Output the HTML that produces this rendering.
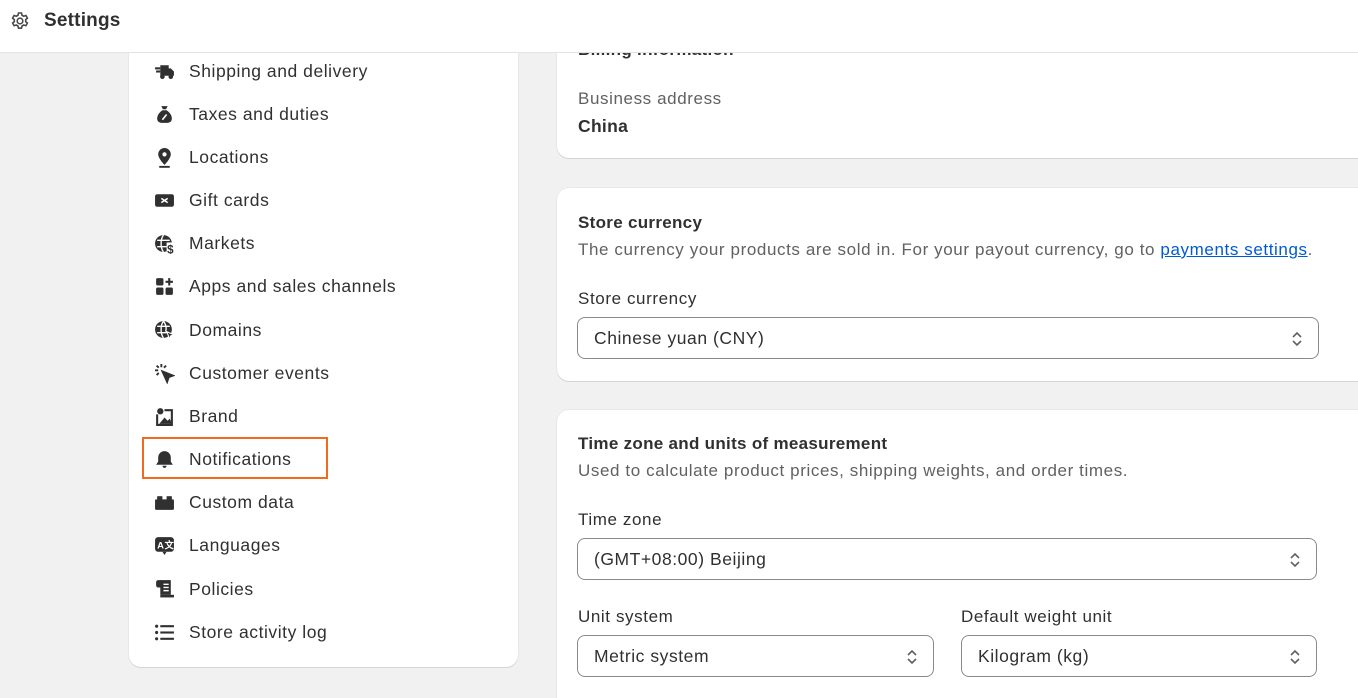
<!DOCTYPE html>
<html><head><style>
*{box-sizing:border-box;margin:0;padding:0}
html,body{width:1358px;height:698px;overflow:hidden}
body{background:#f1f1f1;font-family:"Liberation Sans",sans-serif;color:#303030;position:relative}
.hdr{position:absolute;left:0;top:0;width:1358px;height:53px;background:#fff;border-bottom:1px solid #e3e3e3;z-index:5}
.hdr span{position:absolute;left:44px;top:10px;font-size:19px;font-weight:bold;color:#303030;letter-spacing:.2px}
.hdr svg{position:absolute;left:10px;top:11px}
.side{position:absolute;left:129px;top:20px;width:389px;height:647px;background:#fff;border-radius:12px;box-shadow:0 1px 0 #d4d4d4,0 0 0 1px #e8e8e8}
.it{position:absolute;left:189px;font-size:17.5px;color:#303030;letter-spacing:.55px;margin-top:1px}
.ic{position:absolute;left:154px;width:21px;height:21px}
.card{position:absolute;left:557px;width:820px;background:#fff;border-radius:12px;box-shadow:0 1px 0 #d4d4d4,0 0 0 1px #e8e8e8}
.t{position:absolute;font-size:17px;letter-spacing:.6px;margin-top:1px}
.g{color:#616161}
.b{font-weight:bold;letter-spacing:.3px}
.sel{position:absolute;border:1px solid #8a8a8a;border-radius:8px;height:42px;background:#fff;font-size:17.5px;padding:10px 16px;color:#303030;letter-spacing:.55px}
.sel svg{position:absolute;right:14px;top:12px}
.nb{position:absolute;left:142px;top:437px;width:186px;height:42px;border:2px solid #f26b1d}
</style></head><body>
<div class="hdr"><svg width="20" height="20" viewBox="0 0 20 20" fill="none" stroke="#4a4a4a" stroke-width="1.6"><circle cx="10" cy="10" r="2.8"/><path d="M8.5 2h3l.5 2.2 1.7 1 2.2-.7 1.5 2.6-1.7 1.5v2l1.7 1.5-1.5 2.6-2.2-.7-1.7 1-.5 2.2h-3l-.5-2.2-1.7-1-2.2.7-1.5-2.6 1.7-1.5v-2L2.6 7.1 4.1 4.5l2.2.7 1.7-1z"/></svg><span>Settings</span></div>
<div class="side"></div>
<div class="nb"></div>
<svg class="ic" style="top:61px" viewBox="0 0 20 20" fill="#303030"><rect x="1" y="6" width="5" height="2"/><rect x="2" y="9" width="4" height="2"/><path d="M6 4h8v3h2l3 3v4H6z"/><circle cx="8" cy="15" r="2.2"/><circle cx="16" cy="15" r="2.2"/></svg>
<div class="it" style="top:60px">Shipping and delivery</div>
<svg class="ic" style="top:104px" viewBox="0 0 20 20" fill="#303030"><path d="M7 2h6l-1.5 3h-3z"/><path d="M8 6h4c3 2 5 5 5 8a4 4 0 0 1-4 4H7a4 4 0 0 1-4-4c0-3 2-6 5-8z"/><path d="M8 15l4-5" stroke="#fff" stroke-width="1.5"/></svg>
<div class="it" style="top:103px">Taxes and duties</div>
<svg class="ic" style="top:147px" viewBox="0 0 20 20" fill="#303030"><path d="M10 1a6 6 0 0 1 6 6c0 4-6 10-6 10S4 11 4 7a6 6 0 0 1 6-6z"/><circle cx="10" cy="7" r="2" fill="#fff"/><rect x="5" y="18" width="10" height="1.8"/></svg>
<div class="it" style="top:146px">Locations</div>
<svg class="ic" style="top:190px" viewBox="0 0 20 20" fill="#303030"><rect x="1" y="4" width="18" height="12" rx="2"/><path d="M7 8l3 2 3-2M7 12l3-2 3 2" stroke="#fff" stroke-width="1.5" fill="none"/></svg>
<div class="it" style="top:189px">Gift cards</div>
<svg class="ic" style="top:233px" viewBox="0 0 20 20" fill="#303030"><circle cx="9" cy="10" r="8"/><path d="M3 7h12M3 13h9M9 2c-3 4-3 12 0 16" stroke="#fff" stroke-width="1.3" fill="none"/><rect x="12" y="9" width="8" height="11" fill="#fff"/><text x="12.5" y="19.5" font-size="11" font-weight="bold" font-family="Liberation Sans">$</text></svg>
<div class="it" style="top:232px">Markets</div>
<svg class="ic" style="top:276px" viewBox="0 0 20 20" fill="#303030"><rect x="2" y="2" width="7" height="7" rx="1.5"/><rect x="2" y="11" width="7" height="7" rx="1.5"/><rect x="11" y="11" width="7" height="7" rx="1.5"/><path d="M14.5 2v7M11 5.5h7" stroke="#303030" stroke-width="2"/></svg>
<div class="it" style="top:275px">Apps and sales channels</div>
<svg class="ic" style="top:319px" viewBox="0 0 20 20" fill="#303030"><circle cx="9" cy="10" r="8"/><path d="M3 7h12M3 13h9M9 2c-3 4-3 12 0 16M9 2c3 4 3 8 2 10" stroke="#fff" stroke-width="1.3" fill="none"/><path d="M12 12l7 3-3 1-1 3z" stroke="#fff" stroke-width="1"/></svg>
<div class="it" style="top:319px">Domains</div>
<svg class="ic" style="top:363px" viewBox="0 0 20 20" fill="none" stroke="#303030" stroke-width="1.8"><path d="M7 1v3M1 7h3M2.5 2.5l2 2M11.5 2.5l-2 2M2.5 11.5l2-2"/><path d="M8 8l10 4-4 1.5L12.5 18z" fill="#303030"/></svg>
<div class="it" style="top:362px">Customer events</div>
<svg class="ic" style="top:406px" viewBox="0 0 20 20" fill="#303030"><circle cx="6" cy="5" r="3"/><path d="M3 8v10h14V4h-7" stroke="#303030" stroke-width="2" fill="none"/><path d="M5 17l5-6 3 3 2-2 2 5z"/></svg>
<div class="it" style="top:405px">Brand</div>
<svg class="ic" style="top:449px" viewBox="0 0 20 20" fill="#303030"><path d="M10 2a6 6 0 0 1 6 6v4l2 3H2l2-3V8a6 6 0 0 1 6-6z"/><path d="M8 16a2 2 0 0 0 4 0" /></svg>
<div class="it" style="top:448px">Notifications</div>
<svg class="ic" style="top:492px" viewBox="0 0 20 20" fill="#303030"><rect x="1" y="7" width="18" height="10" rx="1"/><rect x="3" y="4" width="5" height="4"/><rect x="12" y="4" width="5" height="4"/></svg>
<div class="it" style="top:491px">Custom data</div>
<svg class="ic" style="top:535px" viewBox="0 0 20 20" fill="#303030"><rect x="1" y="2" width="18" height="14" rx="3"/><path d="M8 16l2 3 2-3"/><text x="3" y="13" font-size="9" font-weight="bold" fill="#fff" font-family="Liberation Sans">A</text><text x="10" y="13" font-size="9" font-weight="bold" fill="#fff" font-family="Liberation Sans, Noto Sans CJK SC, sans-serif">文</text></svg>
<div class="it" style="top:534px">Languages</div>
<svg class="ic" style="top:578px" viewBox="0 0 20 20" fill="#303030"><rect x="2" y="2" width="6" height="7" rx="2"/><rect x="6" y="2" width="10" height="14"/><path d="M9 6h5M9 9h5M9 12h5" stroke="#fff" stroke-width="1.4"/><rect x="6" y="16" width="13" height="2.5"/></svg>
<div class="it" style="top:578px">Policies</div>
<svg class="ic" style="top:622px" viewBox="0 0 20 20" fill="#303030"><circle cx="2.5" cy="4" r="1.5"/><circle cx="2.5" cy="10" r="1.5"/><circle cx="2.5" cy="16" r="1.5"/><rect x="6" y="3" width="13" height="2"/><rect x="6" y="9" width="13" height="2"/><rect x="6" y="15" width="13" height="2"/></svg>
<div class="it" style="top:621px">Store activity log</div>

<div class="card" style="top:-20px;height:178px"></div>
<div class="t b" style="left:578px;top:39px;z-index:1">Billing information</div>
<div class="t g" style="left:578px;top:88px">Business address</div>
<div class="t b" style="left:578px;top:115px;font-size:17.5px">China</div>

<div class="card" style="top:188px;height:193px"></div>
<div class="t b" style="left:578px;top:212px">Store currency</div>
<div class="t g" style="left:578px;top:239px">The currency your products are sold in. For your payout currency, go to <span style="color:#005bd3;text-decoration:underline">payments settings</span>.</div>
<div class="t" style="left:578px;top:288px">Store currency</div>
<div class="sel" style="left:577px;top:317px;width:742px">Chinese yuan (CNY)<svg width="14" height="18" viewBox="0 0 14 18" fill="none" stroke="#616161" stroke-width="1.6"><path d="M3 7l4-4 4 4M3 11l4 4 4-4"/></svg></div>

<div class="card" style="top:410px;height:320px"></div>
<div class="t b" style="left:578px;top:433px">Time zone and units of measurement</div>
<div class="t g" style="left:578px;top:460px">Used to calculate product prices, shipping weights, and order times.</div>
<div class="t" style="left:578px;top:509px">Time zone</div>
<div class="sel" style="left:577px;top:538px;width:740px">(GMT+08:00) Beijing<svg width="14" height="18" viewBox="0 0 14 18" fill="none" stroke="#616161" stroke-width="1.6"><path d="M3 7l4-4 4 4M3 11l4 4 4-4"/></svg></div>
<div class="t" style="left:578px;top:606px">Unit system</div>
<div class="t" style="left:961px;top:606px">Default weight unit</div>
<div class="sel" style="left:577px;top:635px;width:357px">Metric system<svg width="14" height="18" viewBox="0 0 14 18" fill="none" stroke="#616161" stroke-width="1.6"><path d="M3 7l4-4 4 4M3 11l4 4 4-4"/></svg></div>
<div class="sel" style="left:961px;top:635px;width:356px">Kilogram (kg)<svg width="14" height="18" viewBox="0 0 14 18" fill="none" stroke="#616161" stroke-width="1.6"><path d="M3 7l4-4 4 4M3 11l4 4 4-4"/></svg></div>
</body></html>
